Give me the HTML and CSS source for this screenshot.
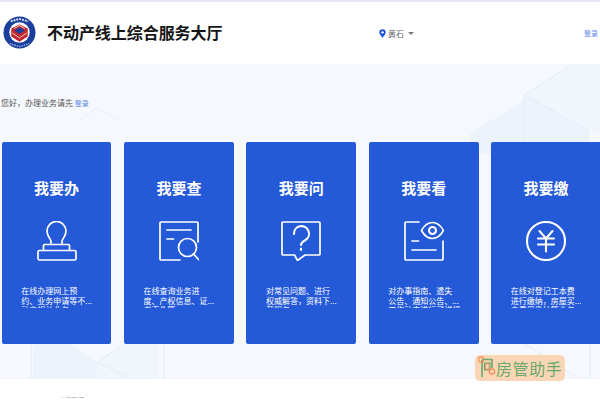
FILE: index.html
```html
<!DOCTYPE html>
<html lang="zh-CN">
<head>
<meta charset="utf-8">
<title>不动产线上综合服务大厅</title>
<link rel="stylesheet" href="styles.css">
</head>
<body>
<header class="header">
  <div class="brand">
    <svg class="logo" viewBox="0 0 34 34" aria-hidden="true">
      <circle cx="17" cy="17" r="16.5" fill="#1b3f9c"/>
      <circle cx="17" cy="17" r="10.5" fill="#fff"/>
      <polygon points="17,8.5 25.5,13 25.5,21 17,26.5 8.5,21 8.5,13" fill="#c3282e"/>
      <polygon points="17,11.5 22.5,15 17,18.5 11.5,15" fill="#1b3f9c"/>
      <polygon points="17,9 23,12.5 22,13.2 17,10.3 12,13.2 11,12.5" fill="#f0b8b0"/>
      <path d="M9.5 17.5 17 22.5l7.5-5" fill="none" stroke="#f3c9c2" stroke-width="1"/>
      <path d="M8 5.5 17 3l9 2.5" fill="none" stroke="#e3e8f6" stroke-width="2" stroke-dasharray="2 1"/>
      <path d="M7 28.500 17 31.500l10-3" fill="none" stroke="#9fb1e0" stroke-width="1.500" stroke-dasharray="1.500 1"/>
    </svg>
    <h1 class="site-title">不动产线上综合服务大厅</h1>
  </div>
  <div class="city">
    <svg class="pin" viewBox="0 0 8 10" aria-hidden="true"><path d="M4 0a3.700 3.700 0 0 1 3.700 3.700C7.700 6.200 4 10 4 10S.3 6.200.3 3.700A3.700 3.700 0 0 1 4 0Z" fill="#1c55d8"/><circle cx="4" cy="3.700" r="1.400" fill="#fff"/></svg>
    <span>黄石</span>
    <span class="caret"></span>
  </div>
  <a class="login-top">登录</a>
</header>

<main class="hero">
  <svg class="hero-bg" viewBox="0 0 600 315" preserveAspectRatio="none" aria-hidden="true">
    <g fill="#edf3fb">
      <polygon points="524,32 588,66 588,120 524,120"/>
      <polygon points="470,70 524,36 524,90 470,90"/>
      <polygon points="33,281 70,281 97,299 97,315 33,315"/>
    </g>
    <g fill="#f1f6fc">
      <polygon points="524,31 573,0 600,0 600,72 588,66"/>
      <polygon points="97,299 125,281 158,281 158,315 97,315"/>
    </g>
    <g fill="none" stroke="#e1ebf7" stroke-width="1">
      <path d="M524 31 573 0"/>
      <path d="M524 31V120"/>
      <path d="M524 31 588 66V120"/>
      <path d="M31 281V315"/>
      <path d="M164 281V315"/>
      <path d="M97 299 130 315"/>
      <path d="M97 299 125 281"/>
      <path class="faint" d="M80 56 97 44l20 12"/>
      <path d="M525 281 578 315"/>
      <path d="M590 281V315"/>
    </g>
  </svg>
  <p class="greeting">您好，办理业务请先 <a class="login-inline">登录</a></p>
  <section class="cards">
    <article class="card">
      <h2 class="card-title">我要办</h2>
      <svg class="card-icon" viewBox="0 0 40 40" aria-hidden="true">
        <path d="M14 23.500V20.500C14 17.500 10 16 10 10a9.500 9.500 0 0 1 19 0C29 16 25 17.500 25 20.500V23.500"/>
        <path d="M6.500 29.500V24.500a1 1 0 0 1 1-1H31.500a1 1 0 0 1 1 1V29.500"/>
        <rect x="1" y="29.500" width="38" height="9.500" rx="1.500"/>
      </svg>
      <p class="card-desc"><span>在线办理网上预</span><span>约、业务申请等不...</span><span>动产相关业务</span></p>
    </article>
    <article class="card">
      <h2 class="card-title">我要查</h2>
      <svg class="card-icon" viewBox="0 0 40 40" aria-hidden="true">
        <path d="M21 39H2a1 1 0 0 1-1-1V2a1 1 0 0 1 1-1H38a1 1 0 0 1 1 1V21"/>
        <path d="M8 9H32"/>
        <path d="M8 18H14.500"/>
        <circle cx="28.500" cy="26.500" r="9"/>
        <path d="M34.500 33 39.500 38.500"/>
      </svg>
      <p class="card-desc"><span>在线查询业务进</span><span>度、产权信息、证...</span><span>书真伪等</span></p>
    </article>
    <article class="card">
      <h2 class="card-title">我要问</h2>
      <svg class="card-icon" viewBox="0 0 40 40" aria-hidden="true">
        <path d="M2 1H38a1 1 0 0 1 1 1V33a1 1 0 0 1-1 1H24L16.500 39.500 13.500 34H2a1 1 0 0 1-1-1V2a1 1 0 0 1 1-1Z"/>
        <path class="thick" d="M13 13a7.500 7.500 0 1 1 11.500 6c-3 1.800-4.500 2.500-4.500 5"/>
        <path class="thick" d="M20 27.500v1.500"/>
      </svg>
      <p class="card-desc"><span>对常见问题、进行</span><span>权威解答，资料下...</span><span>载服务</span></p>
    </article>
    <article class="card">
      <h2 class="card-title">我要看</h2>
      <svg class="card-icon" viewBox="0 0 40 40" aria-hidden="true">
        <path d="M15 1H2a1 1 0 0 0-1 1V38a1 1 0 0 0 1 1H38a1 1 0 0 0 1-1V20"/>
        <path d="M17.500 9.500C20.500 4 24.500 1.500 28.500 1.500s8 2.500 11 8C36.500 15 32.500 17.500 28.500 17.500s-8-2.500-11-8Z"/>
        <circle class="thick" cx="28.500" cy="9.500" r="3.500"/>
        <path d="M8 20H14.500"/>
        <path d="M8 29H32"/>
      </svg>
      <p class="card-desc"><span>对办事指南、遗失</span><span>公告、通知公告、...</span><span>工作动态进行了详细</span></p>
    </article>
    <article class="card">
      <h2 class="card-title">我要缴</h2>
      <svg class="card-icon" viewBox="0 0 40 40" aria-hidden="true">
        <circle class="thick" cx="20" cy="20" r="19"/>
        <path class="thick" d="M13.500 10 20 17.500 26.500 10"/>
        <path class="thick" d="M12 17.500H28"/>
        <path class="thick" d="M12 23.500H28"/>
        <path class="thick" d="M20 17.500V30.500"/>
      </svg>
      <p class="card-desc"><span>在线对登记工本费</span><span>进行缴纳，房屋买...</span><span>卖费用缴纳等业务</span></p>
    </article>
  </section>
</main>
<div class="watermark">
  <svg class="wm-icon" viewBox="0 0 18 26" aria-hidden="true">
    <path d="M4 5V22M4 4.500H14V13" fill="none" stroke="#69a86c" stroke-width="1.600"/>
    <rect x="6.500" y="8" width="5.500" height="7" fill="none" stroke="#69a86c" stroke-width="1.200"/>
    <circle cx="3" cy="4.500" r="2.600" fill="none" stroke="#f08a5a" stroke-width="1.200"/>
    <circle cx="14" cy="16.500" r="2.600" fill="none" stroke="#f08a5a" stroke-width="1.200"/>
    <rect x="7.500" y="9" width="3.500" height="5" fill="none" stroke="#f08a5a" stroke-width=".8"/>
  </svg>
  <span>房管助手</span>
</div>
<footer class="footer"><span>友情链接：</span></footer>
</body>
</html>
```
FILE: styles.css
```css
* { box-sizing: border-box; margin: 0; padding: 0; }
html, body { height: 400px; overflow: hidden; }
body {
  position: relative;
  background: #fff;
  color: #333;
  font-family: "Noto Sans CJK SC", "Liberation Sans", sans-serif;
}
.header {
  height: 64px;
  border-top: 2px solid #e3e8f3;
  background: #fff;
  display: flex;
  align-items: center;
  padding: 0 2px 0 3px;
}
.brand { display: flex; align-items: center; gap: 11px; width: 375px; margin-top: -2px; }
.logo { width: 33px; height: 33px; flex: none; margin-top: 1px; }
.site-title { font-size: 16px; font-weight: 700; line-height: 20px; color: #151515; letter-spacing: -.05px; }
.city {
  display: flex;
  align-items: center;
  gap: 3px;
  font-size: 8px;
  color: #666;
}
.pin { width: 7px; height: 9px; margin-left: 1px; margin-right: -1px; }
.caret {
  width: 0; height: 0;
  margin-left: 1px;
  border-left: 3px solid transparent;
  border-right: 3px solid transparent;
  border-top: 3px solid #777;
}
.login-top { margin-left: auto; font-size: 7px; color: #5a86e6; }
.hero {
  position: relative;
  height: 315px;
  background: #f5f8fc;
  padding-top: 33px;
  border-bottom: 1px solid #f1f4f9;
}
.hero-bg { position: absolute; inset: 0; width: 100%; height: 100%; }
.faint { stroke: #ebf1f9; }
.greeting {
  position: relative;
  font-size: 8px;
  line-height: 12px;
  color: #555;
  padding-left: 1px;
}
.login-inline { font-size: 7px; color: #5a86e6; }
.cards {
  position: relative;
  display: flex;
  gap: 12.700px;
  margin-top: 33px;
  padding-left: 1.700px;
}
.card {
  flex: none;
  width: 109.700px;
  height: 202px;
  background: #2459d8;
  border-radius: 2px;
  color: #fff;
  display: flex;
  flex-direction: column;
  align-items: center;
  box-shadow: 0 0 1px #fff;
}
.card-title {
  font-size: 15px;
  font-weight: 700;
  line-height: 20px;
  margin-top: 35.500px;
}
.card-icon {
  width: 40px;
  height: 40px;
  margin-top: 23.500px;
  fill: none;
  stroke: #fff;
  stroke-width: 1.700;
  stroke-linecap: round;
  stroke-linejoin: round;
}
.thick { stroke-width: 2.100; }
.card-desc {
  align-self: flex-start;
  margin: 25px 0 0 19.500px;
  height: 22px;
  overflow: hidden;
  font-size: 8px;
  line-height: 9.500px;
}
.card-desc span { display: block; white-space: nowrap; }
.watermark {
  position: absolute;
  left: 475px;
  top: 355px;
  width: 90px;
  height: 26px;
  display: flex;
  align-items: center;
  padding-left: 3px;
  background: #fbd6b6;
  border-radius: 5px;
  color: #6aa86e;
  font-size: 16px;
  letter-spacing: .6px;
  white-space: nowrap;
}
.wm-icon { width: 18px; height: 26px; flex: none; }
.footer {
  height: 19px;
  padding: 17px 0 0 60px;
  font-size: 6px;
  line-height: 8px;
  color: #888;
  overflow: hidden;
}
```
